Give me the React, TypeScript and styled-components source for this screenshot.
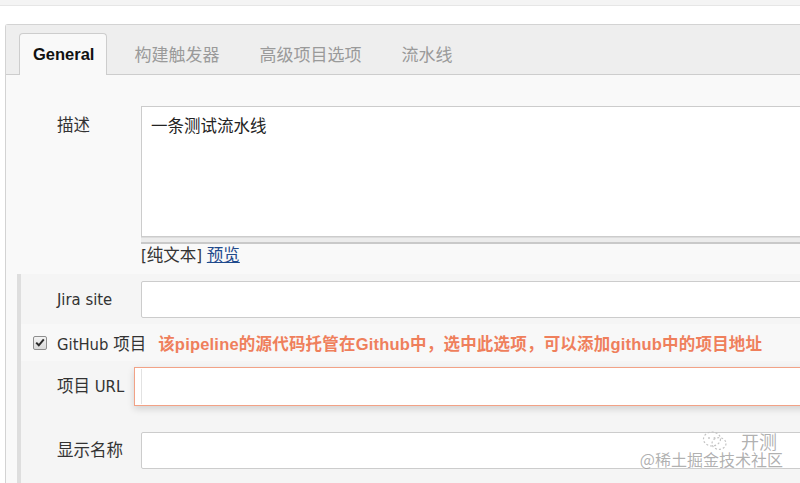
import styled, { createGlobalStyle } from "styled-components";

const GlobalStyle = createGlobalStyle`
  html {
    overflow: hidden;
  }
  body {
    margin: 0;
    padding: 0;
    background: #ffffff;
    font-family: "DejaVu Sans Condensed", "DejaVu Sans", "Noto Sans CJK SC", sans-serif;
    font-size: 16.5px;
    color: #333;
  }
`;

const TopStrip = styled.div`
  height: 5px;
  background: #f4f4f4;
  border-bottom: 1px solid #e6e6e6;
`;

const Main = styled.main`
  padding: 18px 0 0 5px;
  position: relative;
  height: 477px;
  box-sizing: border-box;
`;

const Panel = styled.section`
  width: 900px;
  border: 1px solid #d3d3d3;
  border-right: none;
  border-radius: 3px 0 0 0;
  background: #f9f9f9;
  height: 480px;
`;

const TabBar = styled.nav`
  display: flex;
  align-items: flex-end;
  height: 50px;
  box-sizing: border-box;
  padding: 9px 0 0 13px;
  background: #eeeeee;
  border-bottom: 1px solid #cdcdcd;
`;

const Tab = styled.div<{ $active?: boolean }>`
  display: flex;
  align-items: center;
  height: 41px;
  box-sizing: border-box;
  font-family: "Liberation Sans", "Noto Sans CJK SC", sans-serif;
  font-size: 17px;
  ${({ $active }) =>
    $active
      ? `
    height: 42px;
    margin-bottom: -1px;
    margin-right: 7px;
    padding: 0 12px 0 13px;
    background: #f9f9f9;
    border: 1px solid #cdcdcd;
    border-bottom: none;
    border-radius: 4px 4px 0 0;
    font-weight: bold;
    font-size: 16.5px;
    color: #111;
  `
      : `
    padding: 0 20px;
    color: #9a9a9a;
  `}
`;

const Content = styled.div`
  padding-top: 31px;
`;

const Row = styled.div<{ $nested?: boolean }>`
  display: grid;
  grid-template-columns: ${({ $nested }) => ($nested ? "120px" : "135px")} 1fr;
  align-items: center;
`;

const Label = styled.label<{ $nested?: boolean; $top?: boolean }>`
  padding-left: ${({ $nested }) => ($nested ? "36px" : "51px")};
  line-height: 20px;
  color: #333;
  align-self: ${({ $top }) => ($top ? "start" : "center")};
  padding-top: ${({ $top }) => ($top ? "10px" : "0")};
`;

const TextArea = styled.textarea`
  display: block;
  width: 100%;
  height: 131px;
  box-sizing: border-box;
  margin: 0;
  padding: 10px 9px;
  border: 1px solid #cccccc;
  background: #fff;
  resize: none;
  font-family: "DejaVu Sans Condensed", "DejaVu Sans", "Noto Sans CJK SC", sans-serif;
  font-size: 16.5px;
  line-height: 20px;
  color: #222;
  outline: none;
`;

const Grip = styled.div`
  height: 7px;
  box-sizing: border-box;
  background: #ececec;
  border-top: 1px solid #dcdcdc;
  border-bottom: 2px solid #c9c9c9;
`;

const Hint = styled.div`
  margin-top: 2px;
  line-height: 20px;
  color: #333;
  a {
    color: #1f4a8c;
    text-decoration: underline;
  }
`;

const Section = styled.div`
  margin: 8px 0 0 11px;
  border-left: 4px solid #dedede;
  background: #f5f5f5;
  padding-bottom: 20px;
`;

const FieldRow = styled(Row)<{ $pad?: string }>`
  padding: ${({ $pad }) => $pad || "7px 0 6px"};
`;

const Input = styled.input`
  display: block;
  width: 100%;
  height: 37px;
  box-sizing: border-box;
  margin: 0;
  border: 1px solid #cccccc;
  border-radius: 2px;
  background: #fff;
  outline: none;
`;

const Highlight = styled.div`
  margin-left: -7px;
  height: 39px;
  box-sizing: border-box;
  padding: 1px 0 1px 6px;
  border: 1.5px solid #f2a286;
  background: #fff;
  box-shadow: 0 3px 7px rgba(0, 0, 0, 0.14);
  ${Input} {
    height: 100%;
    border: none;
    border-left: 1px solid #e2e2e2;
    border-radius: 0;
  }
`;

const CheckRow = styled.div`
  display: flex;
  align-items: center;
  height: 37px;
  padding-left: 12px;
  background: #f8f8f8;
`;

const CheckBox = styled.span`
  display: inline-flex;
  align-items: center;
  justify-content: center;
  width: 14px;
  height: 14px;
  box-sizing: border-box;
  margin-right: 10px;
  border: 1px solid #8e8e8e;
  border-radius: 2px;
  background: linear-gradient(#f4f4f4, #d9d9d9);
`;

const Note = styled.span`
  margin-left: 12px;
  font-family: "Liberation Sans", "Noto Sans CJK SC", sans-serif;
  font-weight: bold;
  font-size: 16.5px;
  letter-spacing: 0.2px;
  color: #ef7f5c;
`;

const Watermark = styled.div`
  position: absolute;
  right: 17px;
  bottom: 16px;
  display: flex;
  flex-direction: column;
  align-items: flex-end;
  font-family: "Noto Sans CJK SC", sans-serif;
  color: rgba(110, 110, 110, 0.55);
  text-shadow: 0 0 2px #fff;
  pointer-events: none;
`;

const MarkTop = styled.div`
  display: flex;
  align-items: center;
  gap: 13px;
  padding-right: 6px;
  height: 18px;
  margin-bottom: 1px;
  font-size: 18px;
  line-height: 18px;
`;

const MarkBottom = styled.div`
  font-size: 16px;
  line-height: 16px;
`;

export default function App() {
  return (
    <>
      <GlobalStyle />
      <TopStrip />
      <Main>
        <Panel>
          <TabBar>
            <Tab $active>General</Tab>
            <Tab>构建触发器</Tab>
            <Tab>高级项目选项</Tab>
            <Tab>流水线</Tab>
          </TabBar>
          <Content>
            <Row>
              <Label $top>描述</Label>
              <div>
                <TextArea readOnly defaultValue="一条测试流水线" />
                <Grip />
                <Hint>
                  [纯文本] <a href="#preview">预览</a>
                </Hint>
              </div>
            </Row>
            <Section>
              <FieldRow $nested>
                <Label $nested>Jira site</Label>
                <Input />
              </FieldRow>
              <CheckRow>
                <CheckBox>
                  <svg width="10" height="9" viewBox="0 0 10 9">
                    <path d="M1.2 4.6 L3.8 7.3 L8.8 1.3" fill="none" stroke="#2b2b2b" strokeWidth="2" />
                  </svg>
                </CheckBox>
                <span>GitHub 项目</span>
                <Note>该pipeline的源代码托管在Github中，选中此选项，可以添加github中的项目地址</Note>
              </CheckRow>
              <FieldRow $nested $pad="6px 0 19px">
                <Label $nested>项目 URL</Label>
                <Highlight>
                  <Input />
                </Highlight>
              </FieldRow>
              <FieldRow $nested>
                <Label $nested>显示名称</Label>
                <Input />
              </FieldRow>
            </Section>
          </Content>
        </Panel>
        <Watermark>
          <MarkTop>
            <svg width="26" height="20" viewBox="0 0 26 20">
              <ellipse cx="10" cy="8" rx="8.5" ry="7" fill="none" stroke="#c4c4c4" strokeWidth="1.2" strokeDasharray="2 2" />
              <ellipse cx="17" cy="12.5" rx="7" ry="5.8" fill="none" stroke="#c4c4c4" strokeWidth="1.2" strokeDasharray="2 2" />
              <circle cx="7" cy="7" r="1" fill="#c8c8c8" />
              <circle cx="12.5" cy="7" r="1" fill="#c8c8c8" />
            </svg>
            <span>开测</span>
          </MarkTop>
          <MarkBottom>@稀土掘金技术社区</MarkBottom>
        </Watermark>
      </Main>
    </>
  );
}
